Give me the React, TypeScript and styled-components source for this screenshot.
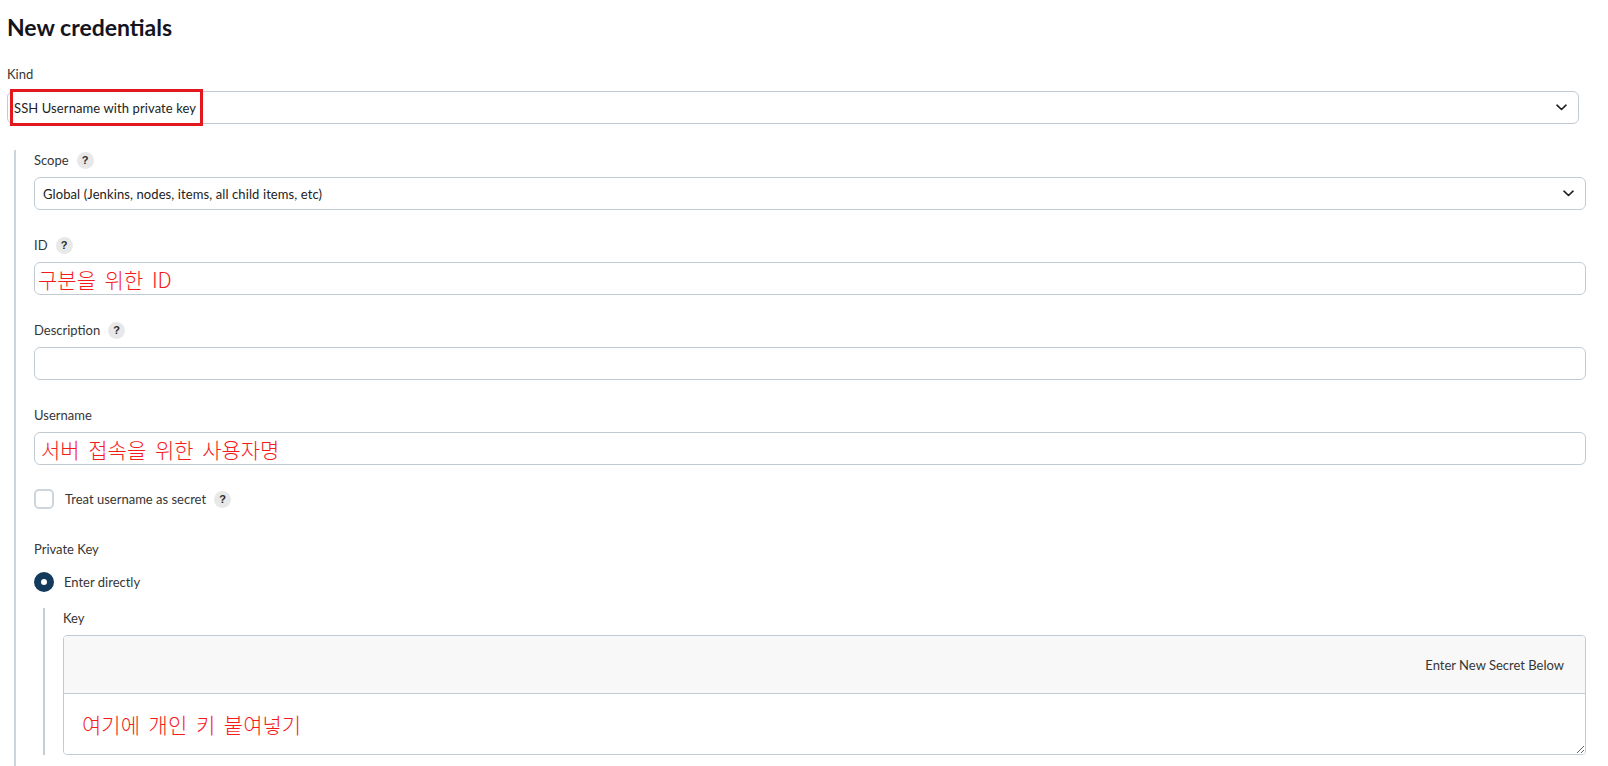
import React from "react";
import styled, { createGlobalStyle } from "styled-components";

const GlobalStyle = createGlobalStyle`
  html, body {
    margin: 0;
    padding: 0;
    background: #ffffff;
    overflow: hidden;
  }
  body {
    font-family: Lato, "Noto Sans CJK KR", sans-serif;
    color: #363636;
  }
`;

const Page = styled.div`
  padding: 12px 22px 0 7px;
  min-height: 100vh;
  box-sizing: border-box;
`;

const Title = styled.h1`
  margin: 0 0 22px 0;
  font-size: 23px;
  line-height: 30px;
  font-weight: 700;
  color: #14141f;
`;

const Field = styled.div<{ $right?: number }>`
  display: flex;
  flex-direction: column;
  margin-right: ${(p) => p.$right ?? 0}px;
`;

const Label = styled.div`
  display: flex;
  align-items: center;
  gap: 8px;
  height: 20px;
  margin-bottom: 7px;
  font-size: 13px;
  color: #363636;
`;

const Help = styled.span`
  display: inline-flex;
  align-items: center;
  justify-content: center;
  width: 17px;
  height: 17px;
  border-radius: 50%;
  background: #e8e8e8;
  color: #2b2b2b;
  font-size: 11px;
  font-weight: 700;
  font-family: "Liberation Sans", sans-serif;
`;

const SelectBox = styled.div<{ $pad: number }>`
  position: relative;
  display: flex;
  align-items: center;
  justify-content: space-between;
  height: 33px;
  box-sizing: border-box;
  border: 1px solid #c3cbd2;
  border-radius: 6px;
  padding: 0 11px 0 ${(p) => p.$pad}px;
  font-size: 13px;
  letter-spacing: 0.1px;
  color: #222222;
  background: #ffffff;
`;

const Highlight = styled.div`
  position: absolute;
  left: 2px;
  top: -3px;
  width: 193px;
  height: 37px;
  box-sizing: border-box;
  border: 3px solid #e3171e;
  pointer-events: none;
`;

const TextInput = styled.input<{ $pad: number }>`
  display: block;
  width: 100%;
  height: 33px;
  box-sizing: border-box;
  border: 1px solid #c3cbd2;
  border-radius: 6px;
  padding: 0 8px 0 ${(p) => p.$pad}px;
  font-family: "Noto Sans CJK KR", sans-serif;
  font-size: 21px;
  font-weight: 300;
  word-spacing: 4px;
  color: #f51b1b;
  background: #ffffff;
  outline: none;
`;

const Section = styled.div<{ $inner?: boolean }>`
  display: flex;
  flex-direction: column;
  gap: 25px;
  margin-left: ${(p) => (p.$inner ? 9 : 7)}px;
  padding-left: 18px;
  padding-bottom: ${(p) => (p.$inner ? 0 : 40)}px;
  border-left: 2px solid ${(p) => (p.$inner ? "#c5cfd3" : "#cdd5da")};
`;

const CheckRow = styled.label`
  display: flex;
  align-items: center;
  height: 20px;
  margin-top: -1px;
  font-size: 13px;
  color: #363636;
`;

const CheckBox = styled.span`
  width: 20px;
  height: 20px;
  box-sizing: border-box;
  border: 2px solid #cfd6db;
  border-radius: 5px;
  margin-right: 11px;
  background: #ffffff;
`;

const HelpAfter = styled(Help)`
  margin-left: 8px;
`;

const Group = styled.div`
  display: flex;
  flex-direction: column;
  margin-top: 5px;
`;

const GroupLabel = styled(Label)`
  margin-bottom: 13px;
`;

const RadioRow = styled.div`
  display: flex;
  align-items: center;
  height: 20px;
  font-size: 13px;
  color: #363636;
  margin-bottom: 16px;
`;

const Radio = styled.span`
  display: inline-flex;
  align-items: center;
  justify-content: center;
  width: 20px;
  height: 20px;
  border-radius: 50%;
  background: #123a5c;
  margin-right: 10px;
  &::after {
    content: "";
    width: 6px;
    height: 6px;
    border-radius: 50%;
    background: #ffffff;
  }
`;

const SecretBox = styled.div`
  display: flex;
  flex-direction: column;
  border: 1px solid #c3cbd2;
  border-radius: 4px;
  overflow: hidden;
`;

const SecretHeader = styled.div`
  display: flex;
  align-items: center;
  justify-content: flex-end;
  height: 57px;
  padding-right: 21px;
  background: #f8f8f8;
  border-bottom: 1px solid #c3cbd2;
  font-size: 13px;
  color: #363636;
`;

const SecretArea = styled.textarea`
  display: block;
  width: 100%;
  height: 60px;
  box-sizing: border-box;
  border: none;
  outline: none;
  resize: vertical;
  padding: 16px 18px 0 18px;
  font-family: "Noto Sans CJK KR", sans-serif;
  font-size: 21px;
  font-weight: 300;
  word-spacing: 4px;
  line-height: 29px;
  color: #f51b1b;
  background: #ffffff;
  overflow: hidden;
`;

const Chevron = () => (
  <svg width="11" height="7" viewBox="0 0 11 7" fill="none">
    <path d="M1 1.2l4.5 4.3L10 1.2" stroke="#1f1f1f" strokeWidth="1.6" strokeLinecap="round" strokeLinejoin="round" />
  </svg>
);

export default function App() {
  return (
    <>
      <GlobalStyle />
      <Page>
        <Title>New credentials</Title>
        <Field $right={7}>
          <Label>Kind</Label>
          <SelectBox $pad={6}>
            <span>SSH Username with private key</span>
            <Chevron />
            <Highlight />
          </SelectBox>
        </Field>
        <div style={{ height: 26 }} />
        <Section>
          <Field>
            <Label>
              Scope <Help>?</Help>
            </Label>
            <SelectBox $pad={8}>
              <span>Global (Jenkins, nodes, items, all child items, etc)</span>
              <Chevron />
            </SelectBox>
          </Field>
          <Field>
            <Label>
              ID <Help>?</Help>
            </Label>
            <TextInput $pad={3} readOnly defaultValue="구분을 위한 ID" />
          </Field>
          <Field>
            <Label>
              Description <Help>?</Help>
            </Label>
            <TextInput $pad={6} readOnly defaultValue="" />
          </Field>
          <Field>
            <Label>Username</Label>
            <TextInput $pad={6} readOnly defaultValue="서버 접속을 위한 사용자명" />
          </Field>
          <CheckRow>
            <CheckBox />
            Treat username as secret
            <HelpAfter>?</HelpAfter>
          </CheckRow>
          <Group>
            <GroupLabel>Private Key</GroupLabel>
            <RadioRow>
              <Radio />
              Enter directly
            </RadioRow>
            <Section $inner>
              <Field>
                <Label>Key</Label>
                <SecretBox>
                  <SecretHeader>Enter New Secret Below</SecretHeader>
                  <SecretArea readOnly defaultValue="여기에 개인 키 붙여넣기" />
                </SecretBox>
              </Field>
            </Section>
          </Group>
        </Section>
      </Page>
    </>
  );
}
